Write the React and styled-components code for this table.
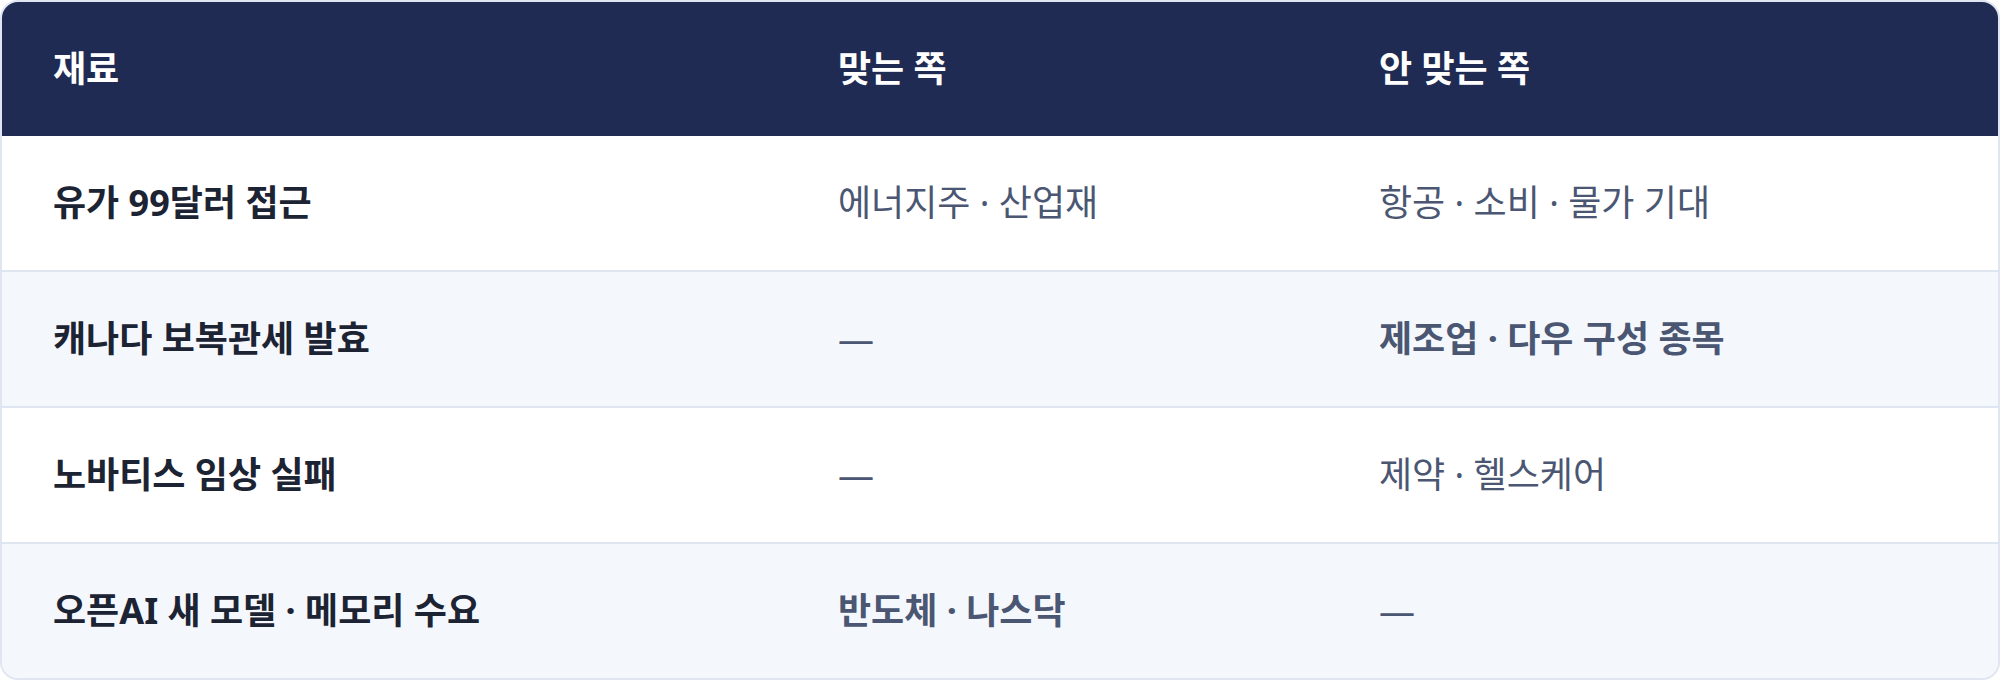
import React from 'react'
import styled, { createGlobalStyle } from 'styled-components'

const colors = {
  navy: '#1f2b53',
  ink: '#1c2333',
  muted: '#4a5672',
  line: '#dfe6f2',
  stripe: '#f4f7fc',
  white: '#ffffff',
}

const GlobalStyle = createGlobalStyle`
  html, body {
    margin: 0;
    padding: 0;
    background: ${colors.white};
  }
  body {
    font-family: "Noto Sans", "Noto Sans CJK KR", sans-serif;
  }
`

const Card = styled.div`
  width: 2000px;
  box-sizing: border-box;
  border: 2px solid ${colors.line};
  border-radius: 18px;
  overflow: hidden;
  background: ${colors.white};
`

const Row = styled.div`
  display: grid;
  grid-template-columns: 785px 541px 1fr;
  align-items: center;
  height: 134px;
  padding: 0 51px;
  background: ${({ $striped }) => ($striped ? colors.stripe : colors.white)};
  border-top: ${({ $divided }) => ($divided ? `2px solid ${colors.line}` : 'none')};
`

const HeaderRow = styled(Row)`
  background: ${colors.navy};
`

const HeadCell = styled.div`
  color: ${colors.white};
  font-size: 36px;
  font-weight: 700;
  line-height: 1.2;
`

const Topic = styled.div`
  color: ${colors.ink};
  font-size: 36px;
  font-weight: 700;
  line-height: 1.2;
`

const Cell = styled.div`
  color: ${colors.muted};
  font-size: 36px;
  font-weight: ${({ $strong }) => ($strong ? 700 : 400)};
  line-height: 1.2;
`

const rows = [
  { topic: '유가 99달러 접근', fit: '에너지주 · 산업재', miss: '항공 · 소비 · 물가 기대' },
  { topic: '캐나다 보복관세 발효', fit: '—', miss: '제조업 · 다우 구성 종목', missStrong: true },
  { topic: '노바티스 임상 실패', fit: '—', miss: '제약 · 헬스케어' },
  { topic: '오픈AI 새 모델 · 메모리 수요', fit: '반도체 · 나스닥', fitStrong: true, miss: '—' },
]

export default function App() {
  return (
    <>
      <GlobalStyle />
      <Card>
        <HeaderRow>
          <HeadCell>재료</HeadCell>
          <HeadCell>맞는 쪽</HeadCell>
          <HeadCell>안 맞는 쪽</HeadCell>
        </HeaderRow>
        {rows.map((r, i) => (
          <Row key={r.topic} $striped={i % 2 === 1} $divided={i > 0}>
            <Topic>{r.topic}</Topic>
            <Cell $strong={r.fitStrong}>{r.fit}</Cell>
            <Cell $strong={r.missStrong}>{r.miss}</Cell>
          </Row>
        ))}
      </Card>
    </>
  )
}
